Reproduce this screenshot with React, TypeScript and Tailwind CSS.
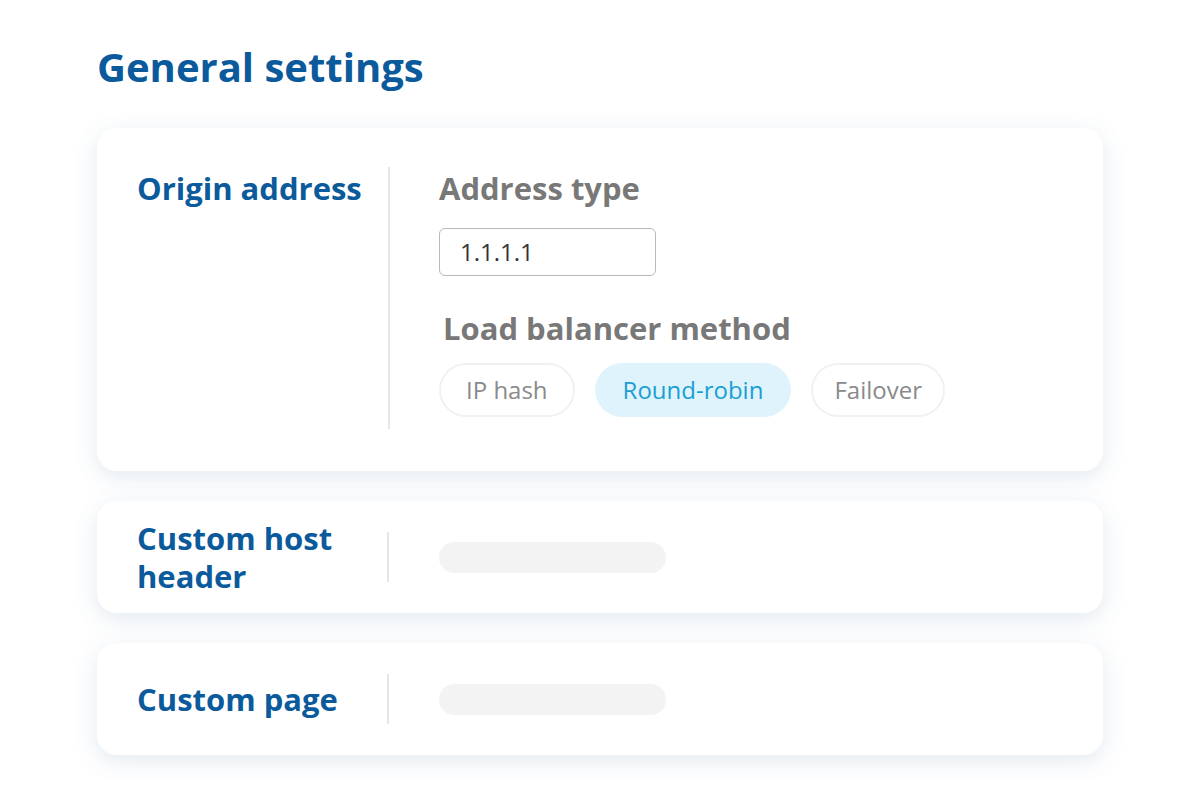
const Row = ({ label, children }: { label: React.ReactNode; children?: React.ReactNode }) => (
  <div className="flex h-[112px] items-center rounded-[20px] bg-white pl-10 shadow-[0_6px_24px_rgba(40,90,140,0.13)]">
    <div className="w-[250px] text-[31px] font-bold leading-[38px] text-[#0b5a9c]">{label}</div>
    <div className="h-[50px] w-[2px] bg-[#e6e6e6]" />
    <div className="pl-[50px]">{children}</div>
  </div>
);

const Placeholder = () => <div className="h-[31px] w-[227px] rounded-full bg-[#f3f3f3]" />;

export default function App() {
  const methods = [
    { name: 'IP hash', active: false },
    { name: 'Round-robin', active: true },
    { name: 'Failover', active: false },
  ];

  return (
    <div className="min-h-[800px] bg-white px-[97px] pt-[42px] font-['Open_Sans',sans-serif]">
      <h1 className="text-[40px] font-bold leading-[50px] text-[#0b5a9c]">General settings</h1>

      <div className="mt-[36px] flex w-[1006px] flex-col gap-[30px]">
        {/* origin address */}
        <div className="flex rounded-[20px] bg-white pt-[39px] pb-[42px] pl-10 shadow-[0_6px_24px_rgba(40,90,140,0.13)]">
          <div className="w-[251px] text-[31px] font-bold leading-[42px] text-[#0b5a9c]">Origin address</div>
          <div className="w-[2px] bg-[#e6e6e6]" />
          <div className="pl-[49px] pb-[12px]">
            <div className="text-[31px] font-bold leading-[42px] text-[#787878]">Address type</div>
            <div className="mt-[19px] flex h-[48px] w-[217px] items-center rounded-[6px] border border-[#b8b8b8] px-5 text-[24px] text-[#333]">
              1.1.1.1
            </div>
            <div className="mt-[31px] pl-1 text-[31px] font-bold leading-[42px] text-[#787878]">Load balancer method</div>
            <div className="mt-[14px] flex gap-5">
              {methods.map((m) => (
                <div
                  key={m.name}
                  className={
                    m.active
                      ? 'flex h-[54px] items-center rounded-full bg-[#dff3fc] px-[28px] text-[24px] text-[#1a9fd3]'
                      : m.name === 'IP hash'
                        ? 'flex h-[54px] items-center rounded-full border-2 border-[#f1f1f1] px-[25px] text-[24px] text-[#8a8a8a]'
                        : 'flex h-[54px] items-center rounded-full border-2 border-[#f1f1f1] px-[21px] text-[24px] text-[#8a8a8a]'
                  }
                >
                  {m.name}
                </div>
              ))}
            </div>
          </div>
        </div>

        <Row label={<>Custom host<br />header</>}>
          <Placeholder />
        </Row>
        <Row label="Custom page">
          <Placeholder />
        </Row>
      </div>
    </div>
  );
}
